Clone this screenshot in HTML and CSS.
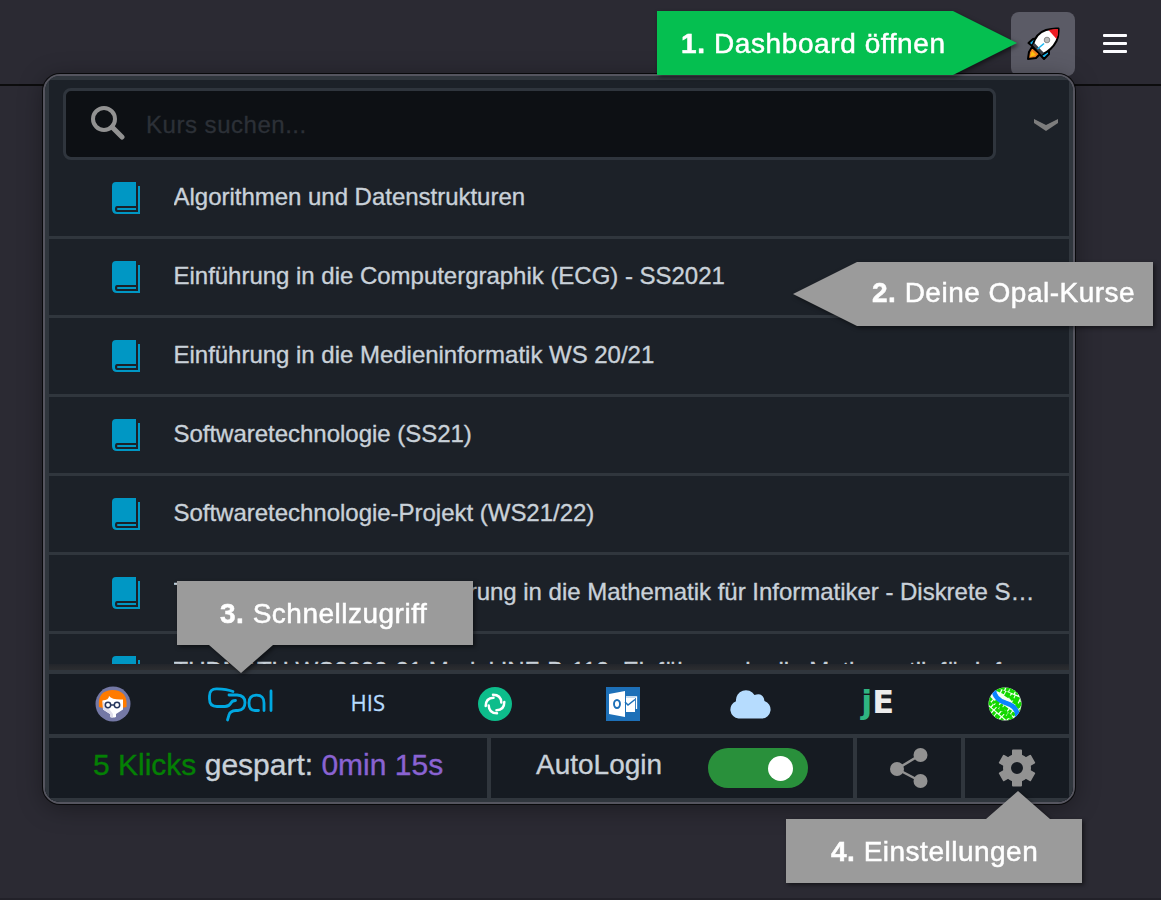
FILE: index.html
```html
<!DOCTYPE html>
<html lang="de">
<head>
<meta charset="utf-8">
<title>Dashboard</title>
<link rel="stylesheet" href="styles.css">
</head>
<body>
<svg class="defs" width="0" height="0">
  <symbol id="book" viewBox="0 0 28 32">
    <path fill="#0097c4" d="M4 0H24V24H5Q3 24 3 27T5 30H26V4H28V32H5Q0 32 0 27V4Q0 0 4 0Z"/>
    <path fill="#0097c4" d="M6 26H24V28H6Q5 28 5 27T6 26Z"/>
  </symbol>
</svg>
<header class="toolbar">
  <button class="rocket" aria-label="Dashboard">
    <svg width="34" height="34" viewBox="0 0 34 34">
      <g stroke="#000" stroke-width="2" stroke-linejoin="round">
        <path fill="#16b5ef" d="M13 11L7 12L2.500 16L7.500 20ZM23 20L23 27L18 32L13.500 27Z"/>
        <path fill="#f58220" d="M6 20L14 27L10 31L2 32L3 25Z"/>
        <path fill="#fff" d="M6.500 18.500Q10 6 20 3Q27 1 32.500 1.500Q33 9 30.500 14Q26 23 15.500 28Z"/>
      </g>
      <path fill="#ed1c24" d="M22.500 3Q27 2 32 2Q32.500 8 30.500 12Z"/>
      <path fill="#3c4048" d="M6.500 18L15.500 28L18 26L8.500 16Z"/>
      <path fill="#ffc20e" d="M6 24L10 28L4 30Z"/>
      <path stroke="#16b5ef" stroke-width="1.500" d="M18 16.500L11.500 22"/>
      <circle cx="21" cy="13" r="2.800" fill="#bbb" stroke="#888"/>
    </svg>
  </button>
  <button class="menu" aria-label="Menü"><i></i><i></i><i></i></button>
</header>

<main class="popup">
  <div class="search-row">
    <div class="search">
      <svg width="34" height="34" viewBox="0 0 34 34" fill="none" stroke="#929292"><circle cx="13" cy="13" r="11" stroke-width="4"/><path d="M21 21L31 31" stroke-width="5" stroke-linecap="round"/></svg>
      <span>Kurs suchen...</span>
    </div>
    <svg class="chevron" width="24" height="12" viewBox="0 0 24 12"><path fill="#7d7d7d" d="M0 0L12 6L24 0V4L12 12L0 4Z"/></svg>
  </div>
  <ul class="courses">
    <li><svg><use href="#book"/></svg><span>Algorithmen und Datenstrukturen</span></li>
    <li><svg><use href="#book"/></svg><span>Einführung in die Computergraphik (ECG) - SS2021</span></li>
    <li><svg><use href="#book"/></svg><span>Einführung in die Medieninformatik WS 20/21</span></li>
    <li><svg><use href="#book"/></svg><span>Softwaretechnologie (SS21)</span></li>
    <li><svg><use href="#book"/></svg><span>Softwaretechnologie-Projekt (WS21/22)</span></li>
    <li><svg><use href="#book"/></svg><span>TUDMATH WS2021, Einführung in die Mathematik für Informatiker - Diskrete Strukturen</span></li>
    <li><svg><use href="#book"/></svg><span>TUDMATH WS2020-21 Modul INF-B-110, Einführung in die Mathematik für Informatiker</span></li>
  </ul>
  <div class="fade"></div>
  <nav class="links">
    <a><svg width="36" height="36" viewBox="0 0 36 36">
      <circle cx="18" cy="18" r="17.500" fill="#7478a5"/>
      <path fill="#ff7b00" d="M4 21Q2 5 17 4Q33 4 31.500 21L27 22H8Z"/>
      <path fill="#fff" d="M7.500 14.500Q14 14 14 10Q17 14 28 13.500V23.500L21 28V31Q18 32 15 31V28L8 23.500Z"/>
      <path fill="#deddea" d="M7.500 14.500L18 28V31.500L15 31V28L8 23.500Z"/>
      <g fill="none" stroke="#27375d" stroke-width="1.500"><circle cx="13" cy="19" r="2.700"/><circle cx="22" cy="19" r="2.700"/><path d="M15.500 19H19.500"/></g>
    </svg></a>
    <a><svg width="66" height="36" viewBox="0 0 66 36" fill="none" stroke="#00a8e1" stroke-width="2.800" stroke-linecap="round" stroke-linejoin="round">
      <path d="M26 5.500Q20 3 10 2.800Q2.500 2.500 2.500 10V13Q2.500 20.500 10 20.500H18Q22 20.500 24 17Q25 14.500 28.500 14.500"/>
      <path d="M22 9H30Q38 9.500 38 16.500Q38 24 31 24.500H29Q23 25 22 29L20.500 34"/>
      <path d="M57 24.500V17Q57 9.200 49.500 9.200T42 17Q42 24.500 48 24.500H51.500M64 5V24.500"/>
    </svg></a>
    <a class="his">HIS</a>
    <a><svg width="36" height="36" viewBox="0 0 36 36">
      <circle cx="18" cy="18" r="17" fill="#0dbd8b"/>
      <g fill="none" stroke="#fff" stroke-width="2.500" stroke-linecap="round"><path id="arc" d="M16 8.700Q24 8.700 24.300 16.500"/><use href="#arc" transform="rotate(90 18 18)"/><use href="#arc" transform="rotate(180 18 18)"/><use href="#arc" transform="rotate(270 18 18)"/></g>
    </svg></a>
    <a><svg width="34" height="34" viewBox="0 0 34 34">
      <path fill="#1d70b8" d="M0 0H34V34H0Z"/><path fill="#fff" d="M3 7L19 4V30L3 27ZM20 11H29V25H20Z"/>
      <path fill="none" stroke="#fff" stroke-width="1.300" d="M20 10H30.500V22"/><path fill="none" stroke="#1d70b8" stroke-width="1.500" d="M19 15L22 18L29 12.500"/>
      <ellipse cx="11" cy="17" rx="3" ry="4" fill="none" stroke="#1d70b8" stroke-width="1.900"/>
    </svg></a>
    <a class="cloud"><svg width="42" height="30" viewBox="0 0 42 30"><path fill="#b6dcfe" d="M9.500 29.500A9 9 0 0 1 7 12.200A10 10 0 0 1 25.500 6Q34 3 35.500 12A9 9 0 0 1 33 29.500Z"/></svg></a>
    <a class="je"><b>j</b>E</a>
    <a><svg width="34" height="34" viewBox="0 0 34 34">
      <clipPath id="globe"><circle cx="17" cy="17" r="16.500"/></clipPath>
      <g clip-path="url(#globe)"><path fill="#f3fff0" d="M0 0H34V34H0Z"/>
      <path fill="none" stroke="#13d800" stroke-width="3.400" stroke-dasharray="5 1.300 3 1" d="M8 2L33 13M12 0L34 8M17 7L34 18M22 9L33 23M20 0L32 5M0 10L25 33M0 15L22 34M0 21L15 34M7 14L27 28M1 27L9 32M12 20L24 31M25 14L34 20"/>
      <path fill="none" stroke="#0a84ff" stroke-width="4.500" d="M6 3Q6 12 18 16Q31 20 29 31"/></g>
    </svg></a>
  </nav>
  <footer class="status">
    <div class="saved"><span class="clicks">5 Klicks</span> gespart: <span class="time">0min 15s</span></div>
    <div class="login"><span>AutoLogin</span><i class="switch"></i></div>
    <div class="cell"><svg width="38" height="40" viewBox="0 0 38 40" fill="#929292"><path fill="none" stroke="#929292" stroke-width="2.500" d="M30 7L7 21L30 33"/><circle cx="30.500" cy="7" r="7"/><circle cx="7" cy="21" r="7"/><circle cx="30.500" cy="33" r="7"/></svg></div>
    <div class="cell"><svg width="38" height="38" viewBox="-19 -19 38 38" fill="#929292"><circle r="10" fill="none" stroke="#929292" stroke-width="8"/>
      <path id="teeth" d="M-5 -12V-17.500Q-5 -18.500 -4 -18.500H4Q5 -18.500 5 -17.500V-12ZM-5 12V17.500Q-5 18.500 -4 18.500H4Q5 18.500 5 17.500V12Z"/><use href="#teeth" transform="rotate(60)"/><use href="#teeth" transform="rotate(120)"/></svg></div>
  </footer>
</main>

<aside class="tip open"><svg width="360" height="64"><path fill="#05bf50" d="M0 0H296L360 32L296 64H0Z"/></svg><p><b>1.</b> Dashboard öffnen</p></aside>
<aside class="tip list"><svg width="360" height="64"><path fill="#9b9b9b" d="M64 0H360V64H64L0 32Z"/></svg><p><b>2.</b> Deine Opal-Kurse</p></aside>
<aside class="tip quick"><svg width="296" height="92"><path fill="#9b9b9b" d="M0 0H296V64H96L64 92L32 64H0Z"/></svg><p><b>3.</b> Schnellzugriff</p></aside>
<aside class="tip settings"><svg width="296" height="92"><path fill="#9b9b9b" d="M0 28H200L232 0L264 28H296V92H0Z"/></svg><p><b>4.</b> Einstellungen</p></aside>
</body>
</html>
```
FILE: styles.css
```css
* { box-sizing: border-box; }
body { margin: 0; height: 900px; overflow: hidden; position: relative; background: #2b2a33; border-bottom: 2px solid #222129; font-family: "Liberation Sans", Arial, sans-serif; color: #c9d1d9; }
svg { display: block; flex: none; }
.defs { position: absolute; }
.toolbar { height: 86px; border-bottom: 2px solid #0c0c0d; display: flex; justify-content: flex-end; align-items: flex-start; gap: 28px; padding: 12px 34px 0 0; }
button { border: 0; padding: 0; background: none; }
.rocket { width: 64px; height: 64px; border-radius: 8px; background: #5b5b66; display: flex; align-items: center; justify-content: center; }
.menu { width: 24px; height: 63px; display: flex; flex-direction: column; justify-content: center; gap: 5.500px; }
.menu i { height: 2.600px; background: #fbfbfe; border-radius: 1px; }
.popup { position: absolute; left: 43px; top: 74px; width: 1032px; height: 730px; border: 2px solid #55555f; border-radius: 17px; background: #1c2128; box-shadow: 0 0 0 1px #09090b, 0 4px 24px rgba(0, 0, 0, .35); overflow: hidden; display: flex; flex-direction: column; }
.popup::after { content: ""; position: absolute; inset: 0; border: 4px solid #30363d; pointer-events: none; }
.search-row { height: 84px; flex: none; padding: 12px 0 0 18px; display: flex; gap: 38px; }
.search { width: 933px; height: 72px; border: 3px solid #2f353d; border-radius: 8px; background: #0d1014; padding-left: 25px; display: flex; align-items: center; gap: 21px; color: #2c3037; font-size: 24px; letter-spacing: .52px; -webkit-text-stroke: .3px; }
.search span { padding-top: 2px; }
.search svg { margin-top: -2px; }
.chevron { margin-top: 31px; }
.courses { margin: 0; padding: 0 4px; list-style: none; height: 504px; flex: none; overflow: hidden; }
.courses li { height: 79px; border-bottom: 3px solid #30363d; padding: 0 32px 0 63px; display: flex; align-items: center; gap: 33.500px; font-size: 24px; letter-spacing: -.02px; -webkit-text-stroke: .35px; }
.courses svg { width: 28px; height: 32px; }
.courses span { white-space: nowrap; overflow: hidden; text-overflow: ellipsis; margin-top: -2px; line-height: 32px; }
.fade { height: 6px; flex: none; background: linear-gradient(#22252b, #2c2d30); }
.links { height: 68px; flex: none; border: solid #30363d; border-width: 4px 0; background: #161b22; display: grid; grid-template-columns: repeat(8, 127.5px); padding-left: 4px; }
.links a { display: flex; align-items: center; justify-content: center; }
.links .his { font: 22px "Open Sans", sans-serif; color: #b6dcfe; padding-bottom: 4px; -webkit-text-stroke: .3px; }
.links .je { font: bold 32px "DejaVu Sans", sans-serif; color: #ececec; padding-bottom: 5px; }
.je b { color: #2fb581; }
.status { height: 64px; flex: none; background: #161b22; display: flex; padding: 0 4px 4px; }
.status > div { display: flex; flex: none; align-items: center; border-right: 4px solid #30363d; }
.status > div:last-child { border-right: 0; width: 104px; }
.saved { width: 442px; padding-left: 44px; padding-bottom: 6px; font-size: 30px; white-space: pre; -webkit-text-stroke: .35px; }
.clicks { color: #048004; }
.time { color: #8a63d2; }
.login { width: 366px; padding-left: 45px; gap: 46px; font-size: 28px; -webkit-text-stroke: .35px; }
.login span { margin-top: -7px; }
.switch { width: 100px; height: 40px; border-radius: 20px; background: #29903b; display: flex; justify-content: flex-end; align-items: center; padding-right: 15px; }
.switch::after { content: ""; width: 25px; height: 25px; border-radius: 50%; background: #fff; }
.cell { width: 108px; justify-content: center; }
.tip { position: absolute; color: #fff; font-size: 28px; letter-spacing: .5px; filter: drop-shadow(2px 2px 2px rgba(0, 0, 0, .5)); display: grid; }
.tip svg, .tip p { grid-area: 1 / 1; }
.tip p { margin: 0; line-height: 64px; height: 64px; white-space: nowrap; -webkit-text-stroke: .5px; }
.open { left: 657px; top: 11px; }
.open p { padding-left: 24px; padding-top: 1px; letter-spacing: .6px; }
.list { left: 793px; top: 262px; }
.list p { padding-left: 79px; margin-top: -1px; }
.quick { left: 177px; top: 581px; }
.quick p { padding-left: 43px; padding-top: 1px; }
.settings { left: 786px; top: 791px; }
.settings p { padding-left: 45px; margin-top: 29px; }
```
